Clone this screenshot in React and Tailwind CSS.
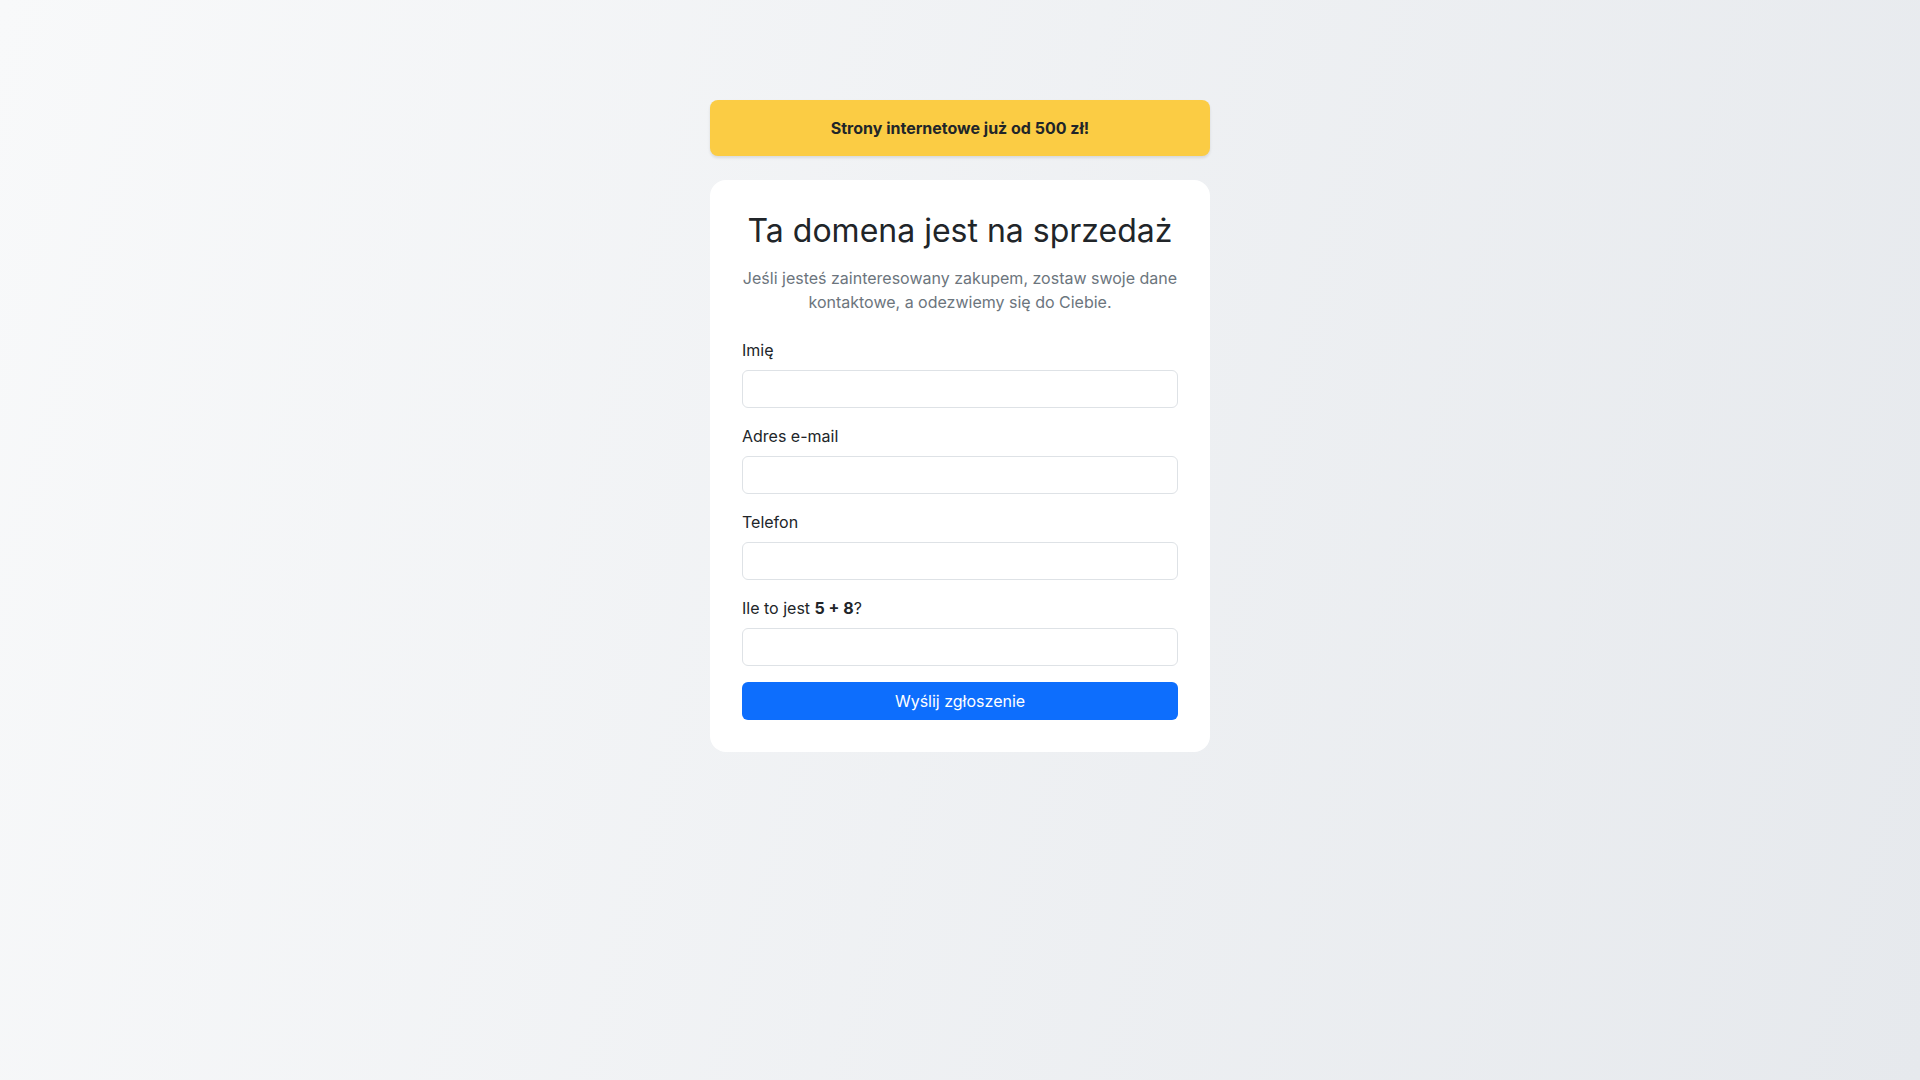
import React from "react";

const Field = ({ id, label, type = "text" }) => (
  <div className="mb-4">
    <label htmlFor={id} className="block mb-2 text-[16px] leading-6 font-normal text-[#212529]">
      {label}
    </label>
    <input
      id={id}
      type={type}
      className="block w-full h-[38px] px-3 rounded-md border border-[#dee2e6] bg-white text-[16px] text-[#212529] outline-none"
    />
  </div>
);

export default function App() {
  return (
    <div
      className="min-h-screen w-full bg-[linear-gradient(105deg,#f8f9fa_0%,#e6e9ed_100%)] text-[#212529]"
      style={{ fontFamily: "Inter, 'Noto Sans', sans-serif" }}
    >
      <div className="w-[500px] mx-auto pt-[100px]">
        {/* Baner */}
        <div className="mb-6 rounded-lg bg-[#fbcc44] py-4 text-center text-[16px] leading-6 font-bold text-[#212529] shadow-[0_2px_3px_rgba(0,0,0,0.1)]">
          Strony internetowe już od 500 zł!
        </div>

        {/* Karta */}
        <div className="rounded-2xl bg-white p-8">
          <h1 className="mb-4 text-center text-[32px] leading-[1.2] font-normal whitespace-nowrap text-[#212529]">
            Ta domena jest na sprzedaż
          </h1>
          <p className="mb-6 text-center text-[16px] leading-6 text-[#6c757d]">
            Jeśli jesteś zainteresowany zakupem, zostaw swoje dane kontaktowe, a odezwiemy się do Ciebie.
          </p>

          <form onSubmit={(e) => e.preventDefault()}>
            <Field id="name" label="Imię" />
            <Field id="email" label="Adres e-mail" type="email" />
            <Field id="phone" label="Telefon" type="tel" />
            <Field
              id="captcha"
              label={
                <>
                  Ile to jest <strong className="font-bold">5 + 8</strong>?
                </>
              }
            />
            <button
              type="submit"
              className="block w-full h-[38px] rounded-md bg-[#0d6efd] text-[16px] font-normal text-white"
            >
              Wyślij zgłoszenie
            </button>
          </form>
        </div>
      </div>
    </div>
  );
}
